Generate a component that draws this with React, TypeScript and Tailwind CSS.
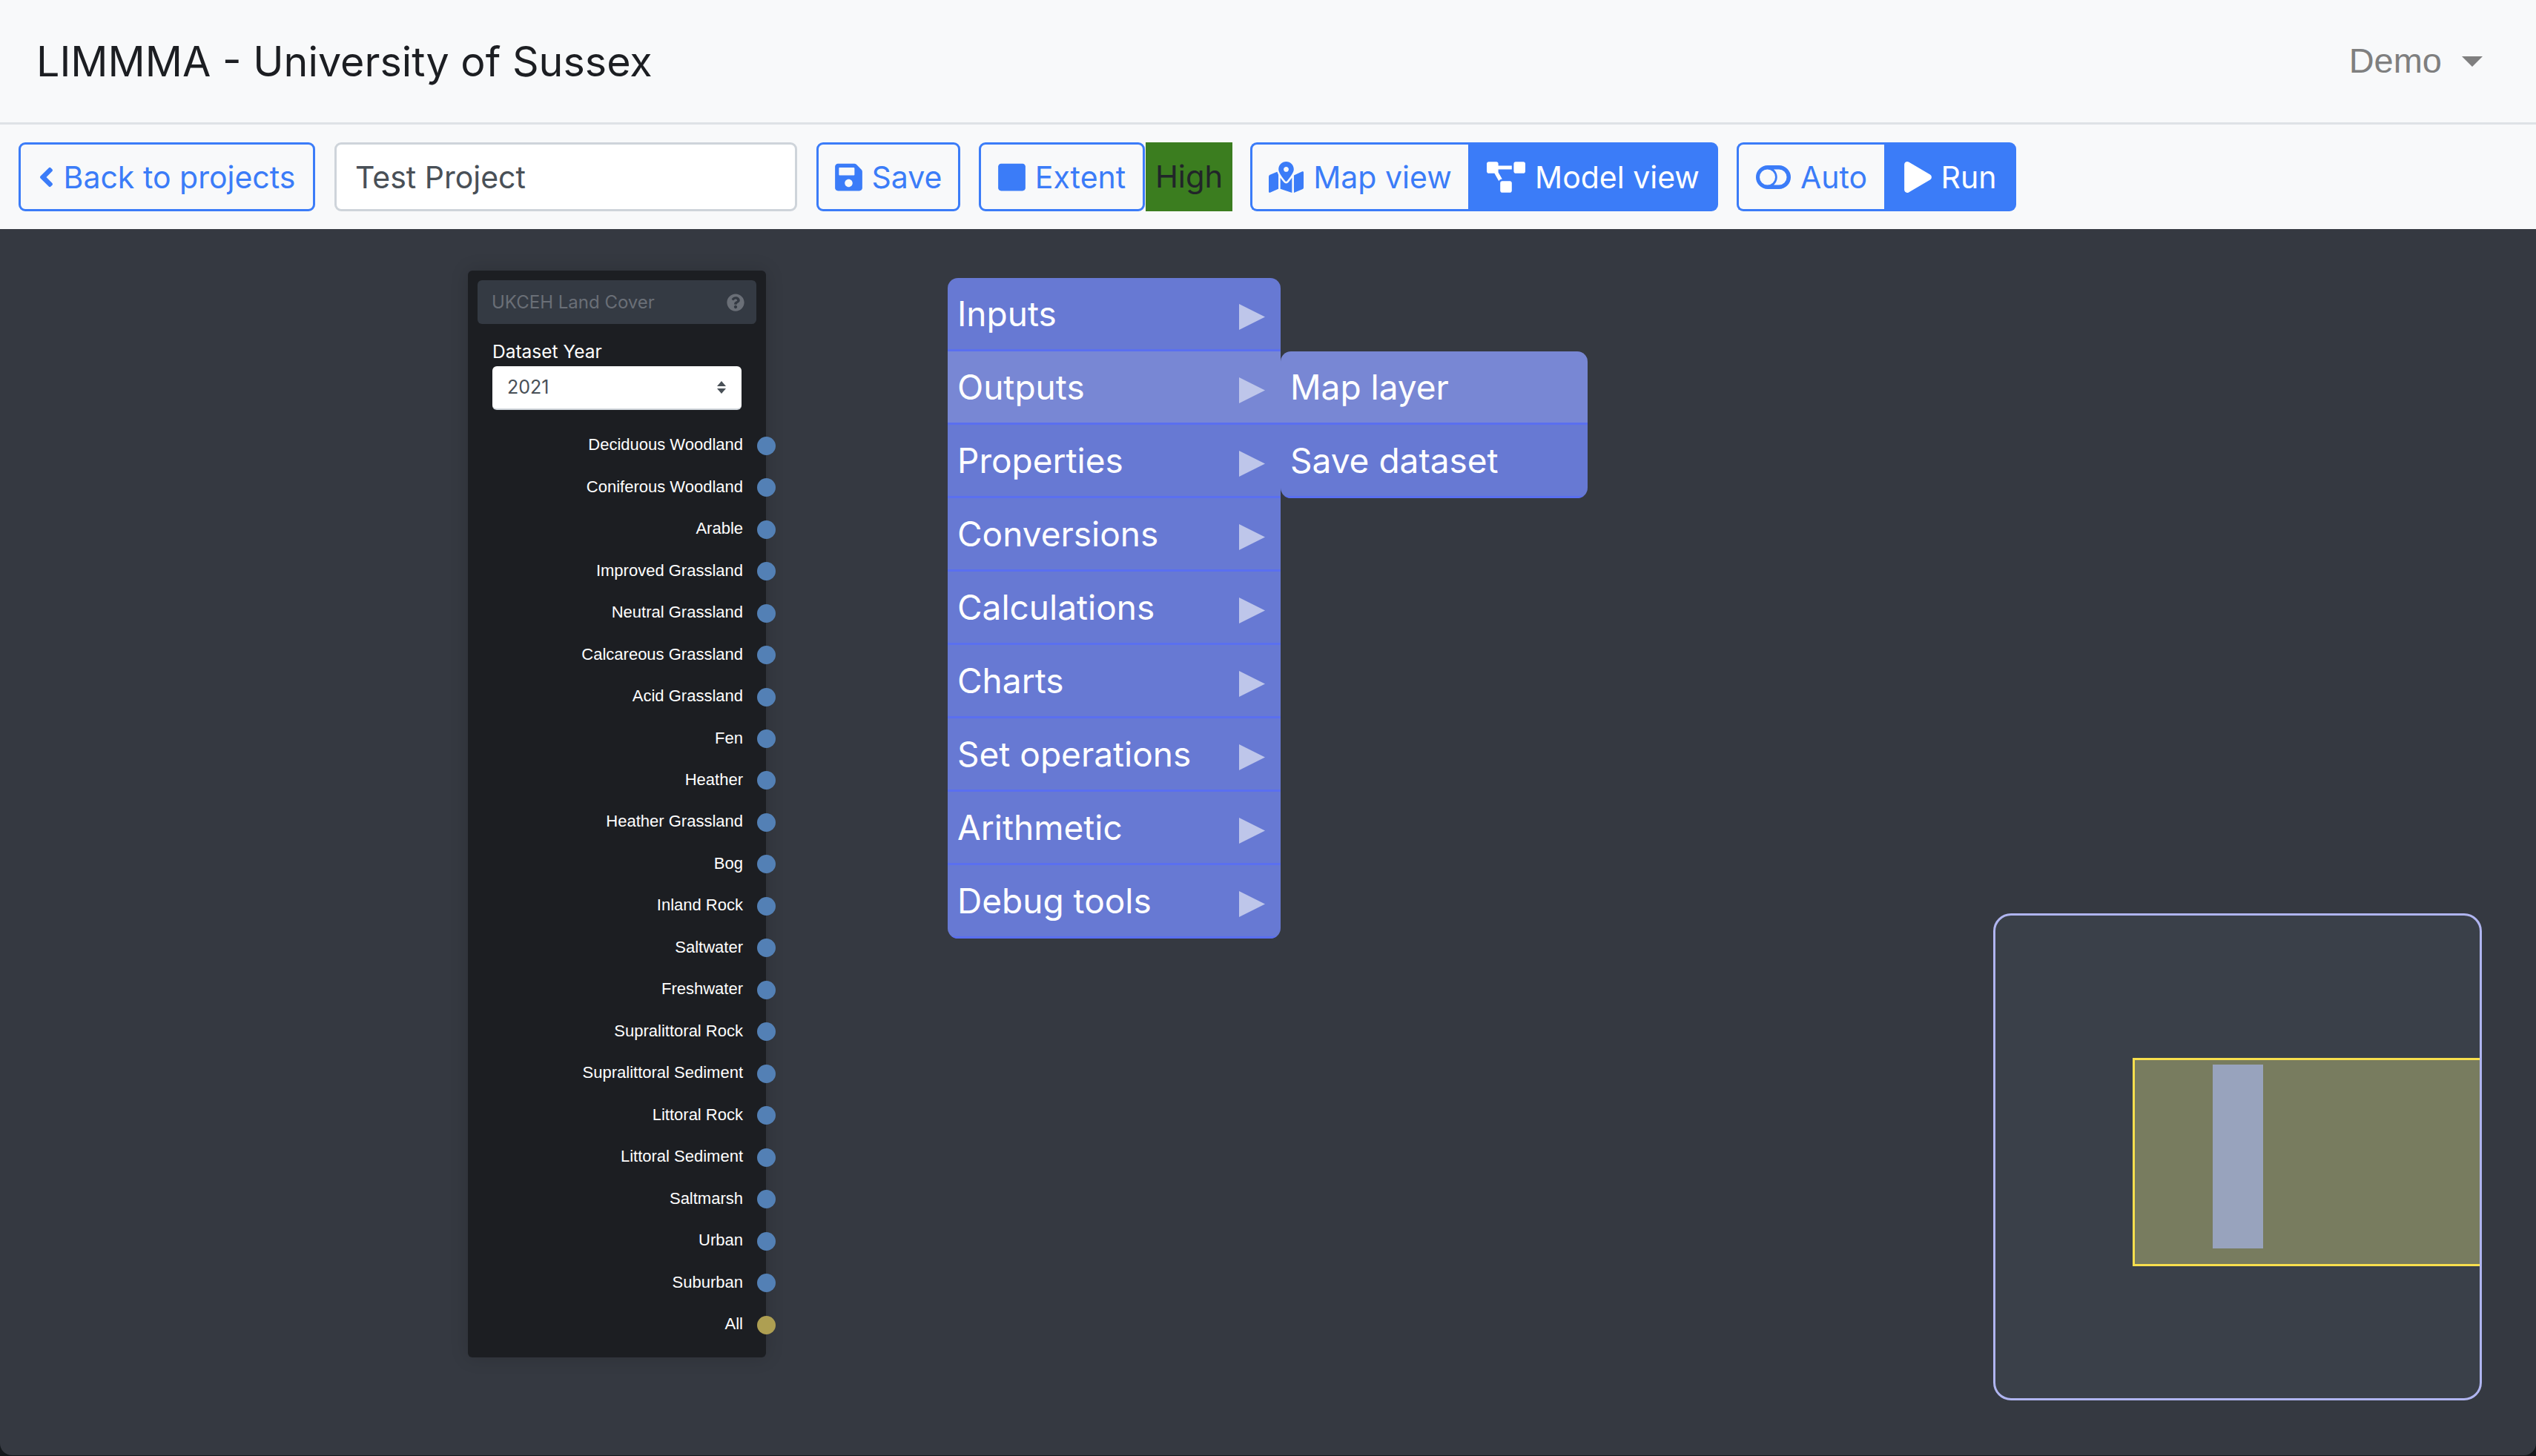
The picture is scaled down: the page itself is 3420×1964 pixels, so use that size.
import { FaAngleLeft, FaMapMarkedAlt, FaPlay, FaProjectDiagram, FaQuestionCircle, FaSave, FaStop } from 'react-icons/fa'

const LAND_COVERS = [
  'Deciduous Woodland',
  'Coniferous Woodland',
  'Arable',
  'Improved Grassland',
  'Neutral Grassland',
  'Calcareous Grassland',
  'Acid Grassland',
  'Fen',
  'Heather',
  'Heather Grassland',
  'Bog',
  'Inland Rock',
  'Saltwater',
  'Freshwater',
  'Supralittoral Rock',
  'Supralittoral Sediment',
  'Littoral Rock',
  'Littoral Sediment',
  'Saltmarsh',
  'Urban',
  'Suburban',
]

const MENU_ITEMS = ['Inputs', 'Outputs', 'Properties', 'Conversions', 'Calculations', 'Charts', 'Set operations', 'Arithmetic', 'Debug tools']

function Port({ label, gold }: { label: string; gold?: boolean }) {
  return (
    <div className="flex h-[56.48px] items-center justify-end">
      <span className="mb-[2px] mr-[19px] font-['Liberation_Sans'] text-[22px] leading-none text-white">{label}</span>
      <span className={`-mr-[26px] h-[25px] w-[25px] rounded-full ${gold ? 'bg-[#ae9f52]' : 'bg-[#5380b5]'}`} />
    </div>
  )
}

function NodeCard() {
  return (
    <div className="absolute left-[631px] top-[56px] h-[1466px] w-[402px] rounded-[6px] bg-[#1c1e22] px-[13px] pt-[13px] shadow-[0_0_24px_rgba(0,0,0,0.15)]">
      <div className="flex h-[59px] items-center justify-between rounded-[6px] bg-[#343a43] pl-[19px] pr-[16px] text-[#6a6f77]">
        <span className="text-[24px]">UKCEH Land Cover</span>
        <FaQuestionCircle className="h-[24px] w-[24px]" />
      </div>
      <div className="ml-[20px] mt-[22px] text-[24.5px] leading-[30px] text-white">Dataset Year</div>
      <div className="ml-[20px] mt-[5px] flex h-[59px] w-[336px] items-center justify-between rounded-[6px] border-b-2 border-[#ced4da] bg-white pl-[20px] pr-[21px] text-[25px] text-[#495057]">
        <span>2021</span>
        <svg width="12" height="17" viewBox="0 0 12 17" className="fill-[#495057]">
          <polygon points="6,0 12,7 0,7" />
          <polygon points="6,17 12,10 0,10" />
        </svg>
      </div>
      <div className="mt-[20px]">
        {LAND_COVERS.map((name) => (
          <Port key={name} label={name} />
        ))}
        <Port label="All" gold />
      </div>
    </div>
  )
}

function MenuRow({ label, hovered, arrow }: { label: string; hovered?: boolean; arrow?: boolean }) {
  return (
    <div className={`flex h-[99px] items-center justify-between border-b-[3px] border-[#5a6ff0] pl-[13px] pr-[21px] text-[46px] text-white ${hovered ? 'bg-[#7887d4]' : 'bg-[#6779d3]'}`}>
      <span>{label}</span>
      {arrow ? (
        <svg width="35" height="35" viewBox="0 0 35 35" className="mt-2 fill-[#bec6ea]">
          <polygon points="0,0 35,17.5 0,35" />
        </svg>
      ) : null}
    </div>
  )
}

function ContextMenu() {
  return (
    <div className="absolute left-[1278px] top-[66px] flex items-start">
      <div className="w-[449px] overflow-hidden rounded-[14px]">
        {MENU_ITEMS.map((item, i) => (
          <MenuRow key={item} label={item} arrow hovered={i === 1} />
        ))}
      </div>
      <div className="mt-[99px] w-[414px] overflow-hidden rounded-[14px]">
        <MenuRow label="Map layer" hovered />
        <MenuRow label="Save dataset" />
      </div>
    </div>
  )
}

function Minimap() {
  return (
    <div className="absolute left-[2688px] top-[923px] h-[657px] w-[659px] overflow-hidden rounded-[24px] border-[3px] border-[#b0b5f0] bg-[#3a4049]">
      <div className="absolute left-[185px] top-[192px] h-[281px] w-[480px] border-[3px] border-[#f8df4d] bg-[#787c5f]" />
      <div className="absolute left-[293px] top-[201px] h-[248px] w-[68px] bg-[#98a3bd]" />
    </div>
  )
}

// FontAwesome's toggle isn't quite this shape, so it's drawn by hand
function AutoIcon() {
  return (
    <svg width="47" height="32" viewBox="0 0 47 32" className="fill-current">
      <path
        fillRule="evenodd"
        d="M16 0H31A16 16 0 0 1 31 32H16A16 16 0 0 1 16 0ZM15.5 5.5A10.5 10.5 0 1 0 15.5 26.5A10.5 10.5 0 1 0 15.5 5.5ZM24 5.5A14 14 0 0 1 24 26.5H31A10.5 10.5 0 0 0 31 5.5Z"
      />
    </svg>
  )
}

const outlineBtn = 'flex h-[93px] items-center justify-center gap-[13px] border-[3px] border-[#3b7cf8] text-[#3b7cf8] text-[41px]'
const solidBtn = 'flex h-[93px] items-center justify-center gap-[13px] bg-[#3b7cf8] text-white text-[41px]'

export default function App() {
  return (
    <div className="flex h-[1964px] w-[3420px] flex-col overflow-hidden bg-[#14181c] font-['Inter',sans-serif]">
      <header className="flex h-[168px] shrink-0 items-center justify-between border-b-[3px] border-[#dee2e6] bg-[#f8f9fa] pl-[49px] pr-[72px]">
        <h1 className="text-[55.6px] font-normal text-[#1c1e22]">LIMMMA - University of Sussex</h1>
        <div className="flex items-center gap-[27px] font-['Liberation_Sans'] text-[47px] text-[#7f7f7f]">
          <span>Demo</span>
          <svg width="28" height="14" viewBox="0 0 28 14" className="fill-[#7f7f7f]">
            <polygon points="0,0 28,0 14,14" />
          </svg>
        </div>
      </header>
      <div className="flex h-[141px] shrink-0 items-center bg-[#f8f9fa] pl-[25px]">
        <div className={`${outlineBtn} w-[400px] rounded-[9px]`}>
          <FaAngleLeft className="h-[42px] w-[21px]" />
          <span className="pt-[3px]">Back to projects</span>
        </div>
        <div className="ml-[26px] flex h-[93px] w-[624px] items-center rounded-[9px] border-[3px] border-[#ced4da] bg-white pl-[25px] pt-[3px] text-[41px] text-[#495057]">Test Project</div>
        <div className={`${outlineBtn} ml-[26px] w-[194px] rounded-[9px]`}>
          <FaSave className="h-[42px] w-[37px]" />
          <span className="pt-[3px]">Save</span>
        </div>
        <div className={`${outlineBtn} ml-[25px] w-[224px] rounded-[9px]`}>
          <FaStop className="h-[42px] w-[37px]" />
          <span className="pt-[3px]">Extent</span>
        </div>
        <div className="ml-px flex h-[93px] w-[117px] items-center justify-center bg-[#3b7d1f] text-[41.6px] text-[#212529]">High</div>
        <div className="ml-[24px] flex">
          <div className={`${outlineBtn} w-[294px] rounded-l-[9px] border-r-0`}>
            <FaMapMarkedAlt className="h-[42px] w-[47px]" />
            <span className="pt-[3px]">Map view</span>
          </div>
          <div className={`${solidBtn} w-[337px] rounded-r-[9px]`}>
            <FaProjectDiagram className="h-[42px] w-[52px]" />
            <span className="pt-[3px]">Model view</span>
          </div>
        </div>
        <div className="ml-[25px] flex">
          <div className={`${outlineBtn} w-[199px] rounded-l-[9px] border-r-0`}>
            <AutoIcon />
            <span className="pt-[3px]">Auto</span>
          </div>
          <div className={`${solidBtn} w-[178px] rounded-r-[9px]`}>
            <FaPlay className="h-[42px] w-[37px]" />
            <span className="pt-[3px]">Run</span>
          </div>
        </div>
      </div>
      <main className="relative mb-[1px] flex-1 rounded-b-[16px] bg-[#353941]">
        <NodeCard />
        <ContextMenu />
        <Minimap />
      </main>
    </div>
  )
}
